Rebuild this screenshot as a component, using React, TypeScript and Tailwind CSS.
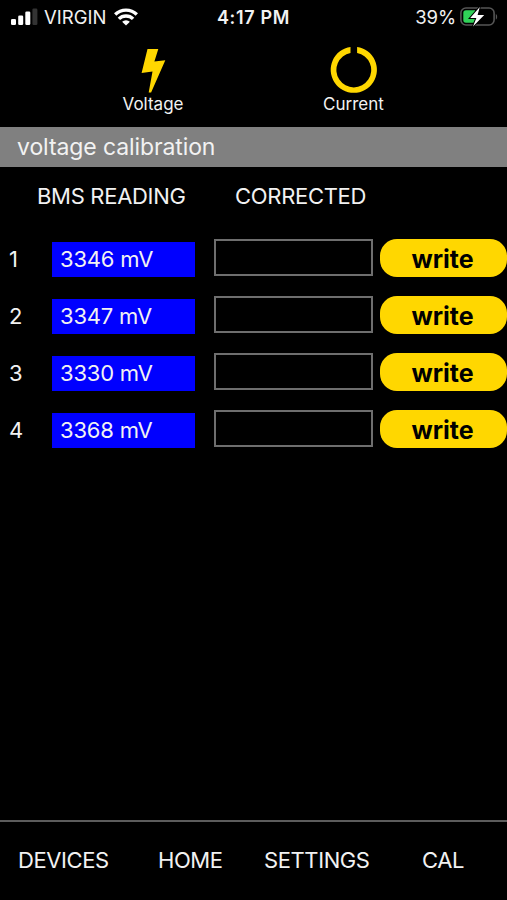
import { useState } from "react";

const readings = [3346, 3347, 3330, 3368];

function StatusBar() {
  return (
    <div className="h-[34px] grid grid-cols-3 items-center pl-[11px] pr-[9px] text-[18px] leading-none">
      <div className="flex items-center">
        <svg width="27" height="18" viewBox="0 0 27 18" fill="#fff">
          <rect x="0" y="11" width="5" height="6" rx="1.3" />
          <rect x="7.2" y="7.5" width="5" height="9.5" rx="1.3" />
          <rect x="14.3" y="3.5" width="5" height="13.5" rx="1.3" />
          <rect x="21.4" y="0.5" width="5" height="16.5" rx="1.3" fill="#333" />
        </svg>
        <span className="ml-1.5 pt-px text-[18.5px] tracking-[0]">VIRGIN</span>
        <svg className="ml-2" width="24" height="18" viewBox="0 0 24 18" fill="none" stroke="#fff" strokeWidth="3.4">
          <path d="M1.2 6.5a15.5 15.5 0 0 1 21.6 0" />
          <path d="M4.9 10.9a10 10 0 0 1 14.2 0" />
          <path d="M8.1 13.8a5.5 5.5 0 0 1 7.8 0L12 17.6z" fill="#fff" stroke="none" />
        </svg>
      </div>
      <div className="text-center pt-px pr-0.5 font-semibold tracking-[0.65px]">4:17 PM</div>
      <div className="flex items-center justify-end">
        <span className="pt-px text-[18.5px] tracking-[-0.1px]">39%</span>
        <svg className="ml-1" width="38" height="22" viewBox="0 0 38 22">
          <rect x="0.9" y="2" width="33.2" height="17" rx="5" fill="none" stroke="#555" strokeWidth="1.6" />
          <path d="M35.8 8v5.6c1.8-.8 1.8-4.8 0-5.6z" fill="#555" />
          <path d="M6 4.3h9v12.4H6A2.7 2.7 0 0 1 3.3 14V7A2.7 2.7 0 0 1 6 4.3z" fill="#30d158" />
          <path
            d="M19.8 1L10.2 12h6.2L13 20.4L24.2 9.1h-6.6z"
            fill="#fff"
            stroke="#000"
            strokeWidth="2"
            paintOrder="stroke"
          />
        </svg>
      </div>
    </div>
  );
}

function Tabs() {
  return (
    <div className="h-[93px] flex px-[53px] text-[17px] leading-5">
      <button className="w-[200px] flex flex-col items-center pt-[12px]">
        <svg width="50" height="48" viewBox="0 0 50 48" fill="#ffd700">
          <path d="M19.5 3h10.8L26.4 15.4l10.9-1.2L23.1 46.6h-2.4l3.8-21.2-10.9 1.5z" />
        </svg>
        <span>Voltage</span>
      </button>
      <button className="w-[201px] flex flex-col items-center pt-[12px]">
        <svg width="50" height="48" viewBox="0 0 50 48" fill="#ffd700">
          <path d="M21.5 .9v6A17.4 17.4 0 1 0 28.1 6.9v-6A23.1 23.1 0 1 1 21.5 .9z" />
        </svg>
        <span>Current</span>
      </button>
    </div>
  );
}

function CellRow({ index, reading }: { index: number; reading: number }) {
  const [value, setValue] = useState("");

  return (
    <div className="h-[38px] flex items-start text-[22px]">
      <div className="w-[52px] pl-[9px] leading-[40px]">{index}</div>
      <div className="w-[143px] h-[35px] mt-[3px] pl-2 bg-[#0000ff] leading-[34px] tracking-[-0.2px]">
        {reading} mV
      </div>
      <input
        value={value}
        onChange={(e) => setValue(e.target.value)}
        className="w-[159px] h-[37px] ml-[19px] px-2 bg-black border-2 border-[#6e6e6e] outline-none"
      />
      <button className="w-[127px] h-[38px] ml-[7px] pr-0.5 rounded-[17px] bg-[#ffd700] text-black text-[25px] font-bold leading-[40px]">
        write
      </button>
    </div>
  );
}

export default function App() {
  return (
    <div className="w-[507px] h-[900px] flex flex-col bg-black text-[#f2f2f2] font-['Inter',sans-serif] overflow-hidden">
      <StatusBar />
      <Tabs />
      <div className="h-10 pl-[17px] bg-[#808080] text-[23px] leading-10 tracking-[-0.1px]">voltage calibration</div>
      <div className="flex pl-[37px] h-[72px] text-[22px] leading-[59px]">
        <div className="w-[198px] tracking-[-0.3px]">BMS READING</div>
        <div className="tracking-[-0.3px]">CORRECTED</div>
      </div>
      <div className="flex flex-col gap-[19px]">
        {readings.map((r, i) => (
          <CellRow key={i} index={i + 1} reading={r} />
        ))}
      </div>
      <nav className="mt-auto h-[80px] flex border-t-2 border-[#5c5c5c] pl-[18px] text-[22px] leading-[76px]">
        <div className="w-[140px] tracking-[-0.4px]">DEVICES</div>
        <div className="w-[106px] tracking-[-0.4px]">HOME</div>
        <div className="w-[158px] tracking-[-0.4px]">SETTINGS</div>
        <div className="tracking-[-0.4px]">CAL</div>
      </nav>
    </div>
  );
}
